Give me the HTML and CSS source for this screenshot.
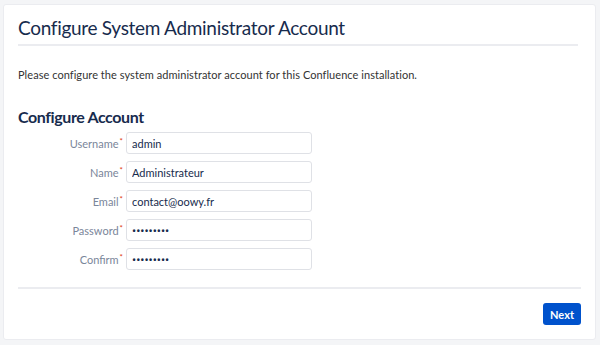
FILE: index.html
```html
<!DOCTYPE html>
<html lang="en">
<head>
  <meta charset="UTF-8" />
  <title>Configure System Administrator Account</title>
  <link rel="stylesheet" href="styles.css">
</head>
<body>
  <div class="card">
    <h1 class="page-title">Configure System Administrator Account</h1>
    <p class="intro">Please configure the system administrator account for this Confluence installation.</p>

    <h2 class="section-title">Configure Account</h2>
    <form class="account-form">
      <div class="field">
        <label for="username">Username<span class="req">*</span></label>
        <input id="username" type="text" value="admin">
      </div>
      <div class="field">
        <label for="fullname">Name<span class="req">*</span></label>
        <input id="fullname" type="text" value="Administrateur">
      </div>
      <div class="field">
        <label for="email">Email<span class="req">*</span></label>
        <input id="email" type="text" value="contact@oowy.fr">
      </div>
      <div class="field">
        <label for="password">Password<span class="req">*</span></label>
        <input id="password" type="password" value="123456789">
      </div>
      <div class="field">
        <label for="confirm">Confirm<span class="req">*</span></label>
        <input id="confirm" type="password" value="123456789">
      </div>
    </form>

    <div class="actions">
      <button class="btn-primary" type="button">Next</button>
    </div>
  </div>
</body>
</html>
```

FILE: styles.css
```css
html, body {
  height: 100%;
}
body {
  margin: 0;
  padding: 4px 4px 5px 3px;
  box-sizing: border-box;
  background-color: #f4f5f7;
  font-family: Lato, "Noto Sans", sans-serif;
  color: #172b4d;
}
.card {
  height: 100%;
  box-sizing: border-box;
  background-color: #fff;
  border: 1px solid #ebecf0;
  border-radius: 3px;
  padding: 10px 14px 14px 14px;
  display: flex;
  flex-direction: column;
}
.page-title {
  margin: 0;
  font-size: 19px;
  font-weight: 400;
  letter-spacing: -0.3px;
  line-height: 26px;
  padding-bottom: 3px;
  margin-right: 3px;
  border-bottom: 2px solid #ebecf0;
}
.intro {
  margin: 21px 0 0;
  font-size: 11px;
  letter-spacing: 0.05px;
  line-height: 16px;
  color: #333;
}
.section-title {
  margin: 23px 0 4px;
  font-size: 16px;
  font-weight: 700;
  letter-spacing: -0.4px;
  line-height: 22px;
}
.account-form {
  display: flex;
  flex-direction: column;
  gap: 7px;
}
.field {
  display: flex;
  align-items: center;
}
.field label {
  width: 105px;
  padding-right: 3px;
  text-align: right;
  font-size: 11px;
  color: #7a869a;
}
.req {
  color: #de350b;
  font-size: 8px;
  vertical-align: 4px;
  margin-left: 1px;
}
.field input {
  width: 186px;
  height: 22px;
  box-sizing: border-box;
  border: 1px solid #dfe1e6;
  border-radius: 3px;
  padding: 0 5px;
  font-family: inherit;
  font-size: 11px;
  color: #172b4d;
}
.field input[type="password"] {
  font-family: "Noto Sans", sans-serif;
}
.actions {
  margin-top: auto;
  border-top: 2px solid #ebecf0;
  padding-top: 14px;
  display: flex;
  justify-content: flex-end;
}
.btn-primary {
  height: 22px;
  padding: 0 7px;
  background-color: #0052cc;
  color: #fff;
  border: none;
  border-radius: 3px;
  font-family: inherit;
  font-size: 11px;
  font-weight: 700;
  cursor: pointer;
}
```
